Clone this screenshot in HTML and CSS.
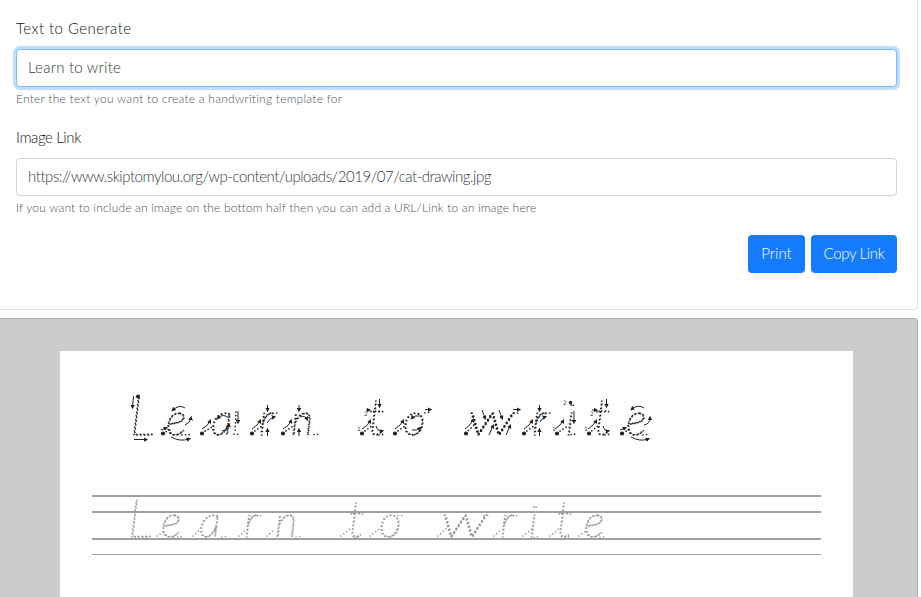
FILE: index.html
```html
<!DOCTYPE html>
<html lang="en">
<head>
<meta charset="utf-8">
<title>Handwriting template</title>
<link rel="stylesheet" href="styles.css">
</head>
<body>
<form class="card">
  <div class="group">
    <label class="label-text" for="text"><span>Text to Generate</span></label>
    <input class="control active" id="text" type="text" value="Learn to write">
    <small class="help-text"><span>Enter the text you want to create a handwriting template for</span></small>
  </div>
  <div class="group">
    <label class="label-link" for="link"><span>Image Link</span></label>
    <input class="control url" id="link" type="text" value="https://www.skiptomylou.org/wp-content/uploads/2019/07/cat-drawing.jpg">
    <small class="help-link"><span>If you want to include an image on the bottom half then you can add a URL/Link to an image here</span></small>
  </div>
  <div class="actions">
    <button class="btn print" type="button">Print</button>
    <button class="btn copy" type="button">Copy Link</button>
  </div>
</form>
<main class="preview">
  <section class="sheet">
    <svg class="worksheet" viewBox="60 351 793 246" width="793" height="246">
      <defs>
        <marker id="tip" viewBox="0 0 6 6" refX="3" refY="3" markerWidth="4.5" markerHeight="4.5" markerUnits="userSpaceOnUse" orient="auto"><path d="M0 0L6 3L0 6z" fill="#222"/></marker>
      </defs>
      <text class="trace dark" y="434.5" x="130 166 211 259 291 330 368 403"><tspan class="cap">L</tspan>earn <tspan class="tall">t</tspan>o</text>
      <text class="trace dark" x="468" y="434.5" textLength="46" lengthAdjust="spacingAndGlyphs">w</text>
      <text class="trace dark" y="434.5" x="532 566 594 626">ri<tspan class="tall">t</tspan>e</text>
      <g class="leads dark">
        <path d="M163 433L170 430M202 433L212 427M252 433L262 426M283 433L293 426M362 433L373 425M395 433L405 426M466 433L475 424M524 433L534 426M557 433L568 426M589 433L598 426M623 433L630 429M182 435L191 434.500M234 434L241 434.500M273 413L280 413M314 434.500L321 434M379 435L385 434M425 413L431 412M514 413L520 413M546 413L552 413M571 434.500L577 434M605 435L611 434M643 435L650 434M236 412L235 433"/>
      </g>
      <g class="starts">
        <circle cx="138" cy="396.500" r="2.100"/><circle cx="163" cy="433.500" r="2.100"/><circle cx="202" cy="433.500" r="2.100"/><circle cx="252" cy="433.500" r="2.100"/><circle cx="283" cy="433.500" r="2.100"/><circle cx="362" cy="433.500" r="2.100"/><circle cx="395" cy="433.500" r="2.100"/><circle cx="466" cy="433.500" r="2.100"/><circle cx="524" cy="433.500" r="2.100"/><circle cx="557" cy="433.500" r="2.100"/><circle cx="589" cy="433.500" r="2.100"/><circle cx="622" cy="433.500" r="2.100"/><circle cx="570.500" cy="402.500" r="1.700"/>
      </g>
      <g class="arrows">
        <path d="M133.500 396L132.500 407"/><path d="M134 439.500H146"/>
        <path d="M161 430L166 428"/><path d="M185 408Q179 404 173 410"/><path d="M185 425Q190 423 191 418"/><path d="M171 437Q180 442 189 439"/>
        <path d="M202 429Q208 426 210 421"/><path d="M229 418Q223 413 218 418"/><path d="M222 431Q228 430 229 425"/><path d="M238 411V422"/>
        <path d="M252 429Q258 425 260 421"/><path d="M267.500 405V410"/><path d="M267.500 436V430"/><path d="M267 423Q270 418 274 417"/>
        <path d="M283 429Q289 426 291 421"/><path d="M299 405V410"/><path d="M299 436V430"/><path d="M300 417Q305 415 307 419"/>
        <path d="M362 429Q368 426 370 421"/><path d="M379.500 399V406"/><path d="M366 410H369"/><path d="M376 426Q378 432 382 431"/>
        <path d="M395 429Q401 425 403 421"/><path d="M420 416Q415 415 412 418"/><path d="M412 430Q417 431 420 428"/><path d="M425 409.500H430"/>
        <path d="M465 429Q471 425 473 420"/><path d="M482 410L485 418"/><path d="M499 410L502 418"/><path d="M489 435L493 426"/><path d="M506 435L510 426"/><path d="M513 409.500H519"/>
        <path d="M524 429Q530 425 532 421"/><path d="M539.500 405V410"/><path d="M539.500 436V430"/><path d="M540 422Q542 418 545 417"/>
        <path d="M555 429Q561 425 563 421"/><path d="M574 411V422"/>
        <path d="M588 429Q594 425 596 421"/><path d="M606.500 399V406"/><path d="M592 410H596"/><path d="M603 426Q605 432 608 431"/>
        <path d="M620 430L625 428"/><path d="M644 408Q638 404 632 409"/><path d="M644 425Q650 424 650 418"/><path d="M631 437Q640 442 648 439"/>
      </g>
      <g class="nums"><text x="357" y="431">1</text><text x="364" y="416">2</text><text x="552" y="431">1</text><text x="563" y="405">2</text><text x="584" y="431">1</text><text x="590" y="416">2</text></g>
      <g class="rules"><path stroke-width="2" d="M92 496H821M92 512H821M92 539H821"/><path stroke-width="1" d="M92 554.500H821"/></g>
      <text class="trace gray" y="537" x="128 161 199 244 275 310 348 379"><tspan class="cap">L</tspan>earn <tspan class="tall">t</tspan>o</text>
      <text class="trace gray" x="441" y="537" textLength="46" lengthAdjust="spacingAndGlyphs">w</text>
      <text class="trace gray" y="537" x="500 529 556 584">ri<tspan class="tall">t</tspan>e</text>
      <g class="leads gray"><path d="M157 536L164 532M193 536L201 529M239 536L247 529M267 536L275 529M341 536L350 529M370 536L379 529M438 536L447 528M494 536L502 529M523 536L532 529M550 536L559 529M579 536L586 531M174 537.500L183 536.500M222 537L229 536M257 515.500H264M296 537L303 536M355 537.500L362 536M398 515.500H404M484 515.500H491M513 515.500H520M534 537.500L541 536M565 537.500L571 536M600 537.500L607 536"/></g>
    </svg>
  </section>
</main>
</body>
</html>
```
FILE: styles.css
```css
* { box-sizing: border-box; }
body {
  margin: 0;
  height: 597px;
  overflow: hidden;
  background: #fff;
  color: #101214;
  font: 300 15px/24px Lato, "Liberation Sans", sans-serif;
}
.card {
  width: 918px;
  height: 310px;
  padding: 17px 20px 0 16px;
  border: solid #dfdfdf;
  border-width: 0 1px 1px 0;
  border-radius: 0 0 4px 0;
}
.group { margin-bottom: 16px; }
label { display: block; height: 24px; margin-bottom: 8px; line-height: 22px; }
.label-text { letter-spacing: 0.44px; }
.label-link { letter-spacing: -0.4px; }
.control {
  display: block;
  width: 100%;
  height: 38px;
  padding: 5px 11px 7px;
  border: 1px solid #ced4da;
  border-radius: 4px;
  outline: 0;
  background: #fff;
  color: #343a40;
  font: inherit;
  letter-spacing: 0.23px;
}
.control.url { letter-spacing: -0.45px; }
.control.active {
  border-color: #80bdff;
  box-shadow: 0 0 0 3px #bfdeff;
}
small {
  display: block;
  height: 19px;
  margin-top: 4px;
  color: #4c5358;
  font-size: 12px;
  line-height: 16px;
  white-space: nowrap;
}
.help-text { letter-spacing: 0.25px; }
.help-link { letter-spacing: 0.17px; }
.actions { display: flex; justify-content: flex-end; gap: 6px; }
.btn {
  height: 38px;
  padding: 0 0 2px;
  border: 0;
  border-radius: 4px;
  background: #147bff;
  color: #fff;
  font: inherit;
}
.print { width: 57px; }
.copy { width: 86px; letter-spacing: -0.35px; }
.preview {
  width: 918px;
  height: 300px;
  margin-top: 8px;
  padding: 32px 0 0 60px;
  border: solid #adadad;
  border-width: 1px 1px 0 0;
  border-radius: 0 4px 0 0;
  background: #ccc;
}
.sheet { width: 793px; height: 268px; background: #fff; }
.worksheet { display: block; }
.trace {
  font: italic 100 44px Lato, Roboto, sans-serif;
  fill: none;
  stroke-width: 1.7;
  stroke-linecap: round;
  stroke-dasharray: 0 3.8;
}
.cap { font-size: 53px; }
.tall { font-size: 50px; }
.leads { fill: none; stroke-width: 1.7; stroke-linecap: round; stroke-dasharray: 0 3.6; }
.dark { stroke: #222; }
.gray { stroke: #999; }
.starts { fill: #222; }
.arrows { fill: none; stroke: #222; stroke-width: 1; }
.arrows path { marker-end: url(#tip); }
.nums { fill: #444; font: 6px "DejaVu Sans", sans-serif; }
.rules { stroke: #a0a0a0; }
```
